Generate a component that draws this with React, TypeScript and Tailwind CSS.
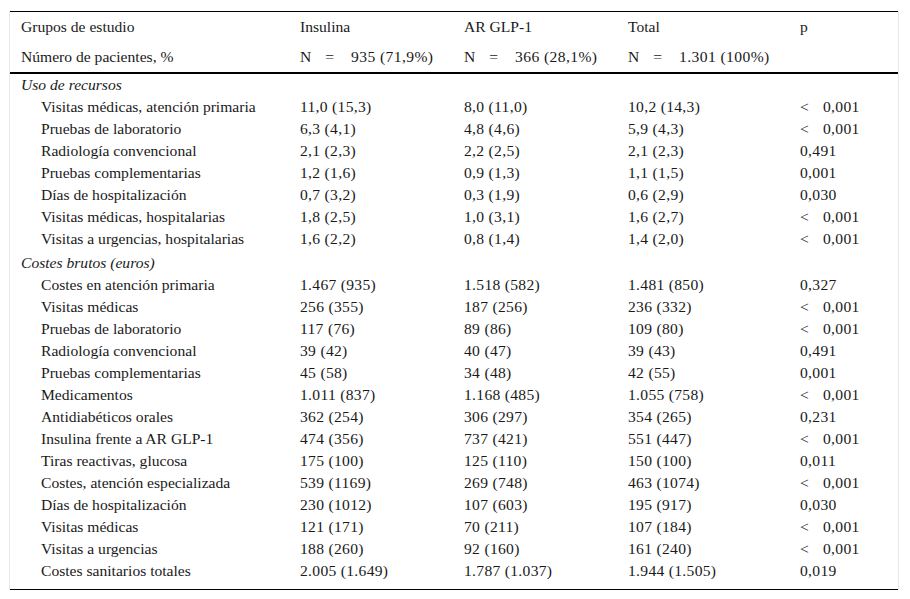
import React from "react";

type Row = [string, string, string, string, string];

const uso: Row[] = [
  ["Visitas médicas, atención primaria", "11,0 (15,3)", "8,0 (11,0)", "10,2 (14,3)", "<0,001"],
  ["Pruebas de laboratorio", "6,3 (4,1)", "4,8 (4,6)", "5,9 (4,3)", "<0,001"],
  ["Radiología convencional", "2,1 (2,3)", "2,2 (2,5)", "2,1 (2,3)", "0,491"],
  ["Pruebas complementarias", "1,2 (1,6)", "0,9 (1,3)", "1,1 (1,5)", "0,001"],
  ["Días de hospitalización", "0,7 (3,2)", "0,3 (1,9)", "0,6 (2,9)", "0,030"],
  ["Visitas médicas, hospitalarias", "1,8 (2,5)", "1,0 (3,1)", "1,6 (2,7)", "<0,001"],
  ["Visitas a urgencias, hospitalarias", "1,6 (2,2)", "0,8 (1,4)", "1,4 (2,0)", "<0,001"],
];

const costes: Row[] = [
  ["Costes en atención primaria", "1.467 (935)", "1.518 (582)", "1.481 (850)", "0,327"],
  ["Visitas médicas", "256 (355)", "187 (256)", "236 (332)", "<0,001"],
  ["Pruebas de laboratorio", "117 (76)", "89 (86)", "109 (80)", "<0,001"],
  ["Radiología convencional", "39 (42)", "40 (47)", "39 (43)", "0,491"],
  ["Pruebas complementarias", "45 (58)", "34 (48)", "42 (55)", "0,001"],
  ["Medicamentos", "1.011 (837)", "1.168 (485)", "1.055 (758)", "<0,001"],
  ["Antidiabéticos orales", "362 (254)", "306 (297)", "354 (265)", "0,231"],
  ["Insulina frente a AR GLP-1", "474 (356)", "737 (421)", "551 (447)", "<0,001"],
  ["Tiras reactivas, glucosa", "175 (100)", "125 (110)", "150 (100)", "0,011"],
  ["Costes, atención especializada", "539 (1169)", "269 (748)", "463 (1074)", "<0,001"],
  ["Días de hospitalización", "230 (1012)", "107 (603)", "195 (917)", "0,030"],
  ["Visitas médicas", "121 (171)", "70 (211)", "107 (184)", "<0,001"],
  ["Visitas a urgencias", "188 (260)", "92 (160)", "161 (240)", "<0,001"],
  ["Costes sanitarios totales", "2.005 (1.649)", "1.787 (1.037)", "1.944 (1.505)", "0,019"],
];

const PValue = ({ v }: { v: string }) =>
  v.startsWith("<") ? (
    <span>
      <span className="inline-block w-[23px]">&lt;</span>
      {v.slice(1)}
    </span>
  ) : (
    <span>{v}</span>
  );

const NCount = ({ v }: { v: string }) => (
  <span className="whitespace-nowrap">
    N<span className="inline-block ml-[14px] mr-[17px]">=</span>
    <span className="tracking-[0.4px]">{v}</span>
  </span>
);

const DataRow = ({ row, last }: { row: Row; last?: boolean }) => {
  const pad = last ? "pt-[3px] pb-[10px]" : "pt-[3px] pb-[3px]";
  const num = "pl-[10px] tracking-[0.3px] " + pad;
  return (
    <tr>
      <td className={"pl-[31px] " + pad}>{row[0]}</td>
      <td className={num}>{row[1]}</td>
      <td className={num}>{row[2]}</td>
      <td className={num}>{row[3]}</td>
      <td className={num}>
        <PValue v={row[4]} />
      </td>
    </tr>
  );
};

const head = "pl-[10px] pt-[7px] pb-[7px]";

export default function App() {
  return (
    <div className="bg-white pt-[11px] pl-[9px] w-[910px] h-[599px]">
      <div className="w-[890px] border-x border-[#e8e8e8]">
        <table
          className="w-full border-collapse text-[15.6px] leading-[16px] text-[#1a1a1a] table-fixed"
          style={{ fontFamily: '"Liberation Serif", "Times New Roman", serif' }}
        >
          <colgroup>
            <col className="w-[280px]" />
            <col className="w-[164px]" />
            <col className="w-[164px]" />
            <col className="w-[172px]" />
            <col />
          </colgroup>
          <thead>
            <tr className="border-t border-black">
              <td className="pl-[11px] pt-[7px] pb-[7px]">Grupos de estudio</td>
              <td className={head}>Insulina</td>
              <td className={head}>AR GLP-1</td>
              <td className={head}>Total</td>
              <td className={head}>p</td>
            </tr>
            <tr className="border-b-2 border-black">
              <td className="pl-[11px] pt-[7px] pb-[7px]">Número de pacientes, %</td>
              <td className={head}>
                <NCount v="935 (71,9%)" />
              </td>
              <td className={head}>
                <NCount v="366 (28,1%)" />
              </td>
              <td className={head}>
                <NCount v="1.301 (100%)" />
              </td>
              <td />
            </tr>
          </thead>
          <tbody>
            <tr>
              <td className="pl-[11px] pt-[3px] pb-[3px] italic" colSpan={5}>
                Uso de recursos
              </td>
            </tr>
            {uso.map((r, i) => (
              <DataRow key={"u" + i} row={r} />
            ))}
            <tr>
              <td className="pl-[11px] pt-[5px] pb-[3px] italic" colSpan={5}>
                Costes brutos (euros)
              </td>
            </tr>
            {costes.map((r, i) => (
              <DataRow key={"c" + i} row={r} last={i === costes.length - 1} />
            ))}
          </tbody>
        </table>
        <div className="border-t border-black" />
      </div>
    </div>
  );
}
